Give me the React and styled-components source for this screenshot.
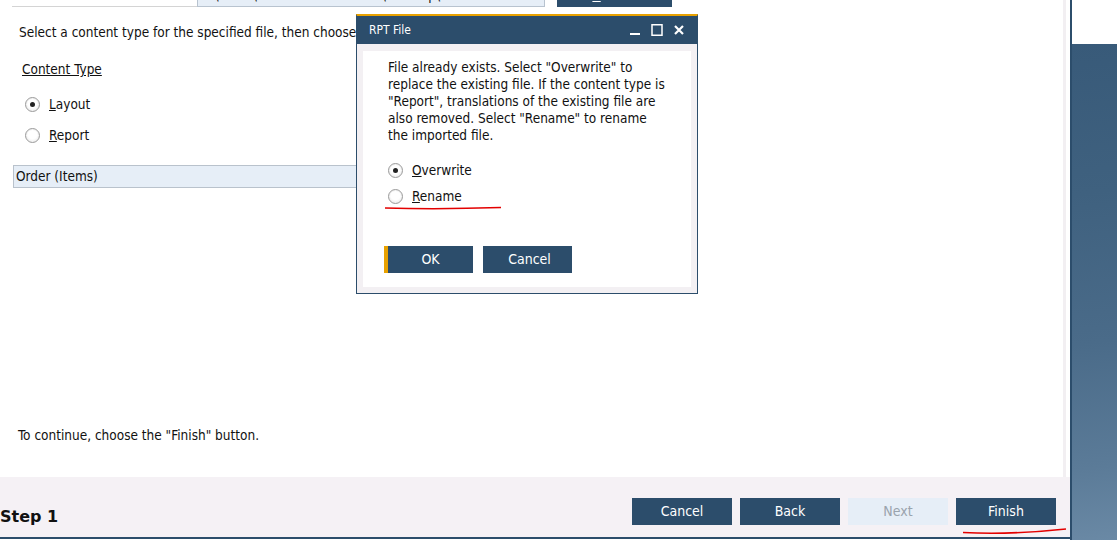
import React from 'react';
import styled, { createGlobalStyle } from 'styled-components';

const GlobalStyle = createGlobalStyle`
  html, body { margin: 0; padding: 0; background: #fff; }
  body {
    font-family: "DejaVu Sans Condensed", "DejaVu Sans", sans-serif;
    font-size: 13.5px;
    color: #111;
    overflow: hidden;
  }
`;

const NAVY = '#2c4d6b';
const ORANGE = '#e8a100';

const Screen = styled.div`
  position: relative;
  display: flex;
  width: 1117px;
  height: 540px;
  overflow: hidden;
`;

const Window = styled.div`
  width: 1070px;
  display: flex;
  flex-direction: column;
  background: #fff;
  border-right: 2px solid ${NAVY};
`;

const Content = styled.div`
  height: 477px;
  margin-right: 4px;
  border-right: 3px solid #f2eff2;
  display: flex;
  flex-direction: column;
  overflow: hidden;
`;

const LocationRow = styled.div`
  display: flex;
  align-items: flex-end;
  height: 24px;
  margin-top: -17px;
`;

const FieldLabel = styled.div`
  width: 179px;
  margin-left: 12px;
  padding-left: 6px;
  border-bottom: 1px solid #d4d4d4;
  line-height: 22px;
`;

const PathInput = styled.div`
  box-sizing: border-box;
  width: 348px;
  height: 24px;
  line-height: 22px;
  padding-left: 4px;
  background: #e6eef7;
  border: 1px solid #b8c3cf;
  white-space: nowrap;
  overflow: hidden;
`;

const BrowseButton = styled.div`
  width: 115px;
  height: 24px;
  margin-left: 12px;
  background: ${NAVY};
  color: #fff;
  text-align: center;
  line-height: 24px;
`;

const Intro = styled.p`
  margin: 17px 0 0 19px;
  line-height: 17px;
  white-space: nowrap;
`;

const SectionLabel = styled.div`
  margin: 20px 0 0 22px;
  line-height: 17px;
  text-decoration: underline;
`;

const RadioList = styled.div`
  display: flex;
  flex-direction: column;
  gap: ${p => p.$gap}px;
  margin: ${p => p.$margin};
`;

const RadioRow = styled.label`
  display: flex;
  align-items: center;
  gap: 9px;
  height: 17px;
  line-height: 17px;
`;

const RadioCircle = styled.span`
  box-sizing: border-box;
  width: 15px;
  height: 15px;
  border-radius: 50%;
  border: 1px solid #9a9a9a;
  background: radial-gradient(circle at 50% 40%, #ffffff 45%, #e4e4e4 100%);
  box-shadow: inset 0 0 0 1px #f2f2f2;
  display: flex;
  align-items: center;
  justify-content: center;
  &::after {
    content: '';
    width: 5px;
    height: 5px;
    border-radius: 50%;
    background: ${p => (p.$checked ? '#222' : 'transparent')};
  }
`;

const Key = styled.span`
  text-decoration: underline;
`;

const SelectBar = styled.div`
  width: 530px;
  height: 21px;
  margin: 21px 0 0 13px;
  padding-left: 2px;
  line-height: 21px;
  background: #e6eef7;
  border: 1px solid #b9c2cc;
`;

const Hint = styled.p`
  margin: auto 0 33px 18px;
  line-height: 17px;
`;

const Footer = styled.div`
  height: 60px;
  display: flex;
  align-items: flex-end;
  justify-content: space-between;
  background: #f5f1f5;
  border-bottom: 2px solid ${NAVY};
  margin-bottom: 1px;
  padding-right: 14px;
`;

const StepTitle = styled.div`
  font-family: "DejaVu Sans", sans-serif;
  font-weight: bold;
  font-size: 16px;
  line-height: 20px;
  margin-bottom: 10px;
`;

const ButtonRow = styled.div`
  display: flex;
  gap: 8px;
  margin-bottom: 12px;
`;

const WizardButton = styled.div`
  width: 100px;
  height: 27px;
  line-height: 27px;
  text-align: center;
  font-size: 14px;
  background: ${p => (p.$disabled ? '#e6eef7' : NAVY)};
  color: ${p => (p.$disabled ? '#9aa3ad' : '#fff')};
`;

const Desktop = styled.div`
  flex: 1;
  display: flex;
  flex-direction: column;
`;

const DesktopTop = styled.div`
  height: 44px;
  background: #fff;
`;

const Wallpaper = styled.div`
  flex: 1;
  background: linear-gradient(172deg, #385a79 0%, #3f617f 30%, #4a6b89 60%, #5b7b98 85%, #6a89a5 100%);
`;

const Dialog = styled.div`
  position: absolute;
  left: 356px;
  top: 14px;
  width: 340px;
  height: 277px;
  display: flex;
  flex-direction: column;
  border: 1px solid ${NAVY};
  border-top: 2px solid ${ORANGE};
  background: #f3f0f3;
`;

const TitleBar = styled.div`
  height: 28px;
  display: flex;
  align-items: center;
  justify-content: space-between;
  padding: 0 12px 0 12px;
  background: ${NAVY};
  color: #fff;
  font-size: 12px;
`;

const TitleIcons = styled.div`
  display: flex;
  align-items: center;
  gap: 10px;
`;

const DialogBody = styled.div`
  flex: 1;
  margin: 7px 6px 6px 6px;
  background: #fff;
  padding: 8px 0 0 25px;
  display: flex;
  flex-direction: column;
`;

const Message = styled.p`
  margin: 0;
  line-height: 17px;
  white-space: nowrap;
`;

const DialogButtons = styled.div`
  display: flex;
  gap: 10px;
  margin: 41px 0 0 -4px;
`;

const DialogButton = styled.div`
  box-sizing: border-box;
  width: 89px;
  height: 27px;
  line-height: 27px;
  text-align: center;
  font-size: 14px;
  background: ${NAVY};
  color: #fff;
  border-left: 4px solid ${p => (p.$primary ? ORANGE : NAVY)};
`;

const Scribble = styled.svg`
  position: absolute;
  left: 0;
  top: 0;
  pointer-events: none;
`;

function Radio({ checked, label, access }) {
  return (
    <RadioRow>
      <RadioCircle $checked={checked} />
      <span>
        <Key>{access}</Key>
        {label}
      </span>
    </RadioRow>
  );
}

export default function App() {
  return (
    <Screen>
      <GlobalStyle />
      <Window>
        <Content>
          <LocationRow>
            <FieldLabel>File Location</FieldLabel>
            <PathInput>C:\Users\a507970C-8dbb-409\Desktop\New Sales Order</PathInput>
            <BrowseButton><Key>B</Key>rowse</BrowseButton>
          </LocationRow>
          <Intro>Select a content type for the specified file, then choose the "Next" button.</Intro>
          <SectionLabel>Content Type</SectionLabel>
          <RadioList $gap={14} $margin="18px 0 0 25px">
            <Radio checked access="L" label="ayout" />
            <Radio access="R" label="eport" />
          </RadioList>
          <SelectBar>Order (Items)</SelectBar>
          <Hint>To continue, choose the "Finish" button.</Hint>
        </Content>
        <Footer>
          <StepTitle>Step 1</StepTitle>
          <ButtonRow>
            <WizardButton>Cancel</WizardButton>
            <WizardButton>Back</WizardButton>
            <WizardButton $disabled>Next</WizardButton>
            <WizardButton>Finish</WizardButton>
          </ButtonRow>
        </Footer>
      </Window>
      <Desktop>
        <DesktopTop />
        <Wallpaper />
      </Desktop>

      <Dialog>
        <TitleBar>
          <span>RPT File</span>
          <TitleIcons>
            <svg width="12" height="12" viewBox="0 0 12 12">
              <rect x="1" y="9" width="10" height="2" fill="#fff" />
            </svg>
            <svg width="12" height="12" viewBox="0 0 12 12">
              <rect x="1" y="0.75" width="10" height="10.5" fill="none" stroke="#fff" strokeWidth="1.5" />
            </svg>
            <svg width="12" height="12" viewBox="0 0 12 12">
              <path d="M2 2 L10 10 M10 2 L2 10" stroke="#fff" strokeWidth="2.2" />
            </svg>
          </TitleIcons>
        </TitleBar>
        <DialogBody>
          <Message>
            File already exists. Select "Overwrite" to<br />
            replace the existing file. If the content type is<br />
            "Report", translations of the existing file are<br />
            also removed. Select "Rename" to rename<br />
            the imported file.
          </Message>
          <RadioList $gap={9} $margin="18px 0 0 0">
            <Radio checked access="O" label="verwrite" />
            <Radio access="R" label="ename" />
          </RadioList>
          <DialogButtons>
            <DialogButton $primary>OK</DialogButton>
            <DialogButton>Cancel</DialogButton>
          </DialogButtons>
        </DialogBody>
      </Dialog>

      <Scribble width="1117" height="540">
        <path d="M385 208 Q440 209.5 501 207.5" stroke="#e30000" strokeWidth="1.5" fill="none" />
        <path d="M963 532.5 Q1010 535 1066 529" stroke="#e30000" strokeWidth="1.6" fill="none" />
      </Scribble>
    </Screen>
  );
}
